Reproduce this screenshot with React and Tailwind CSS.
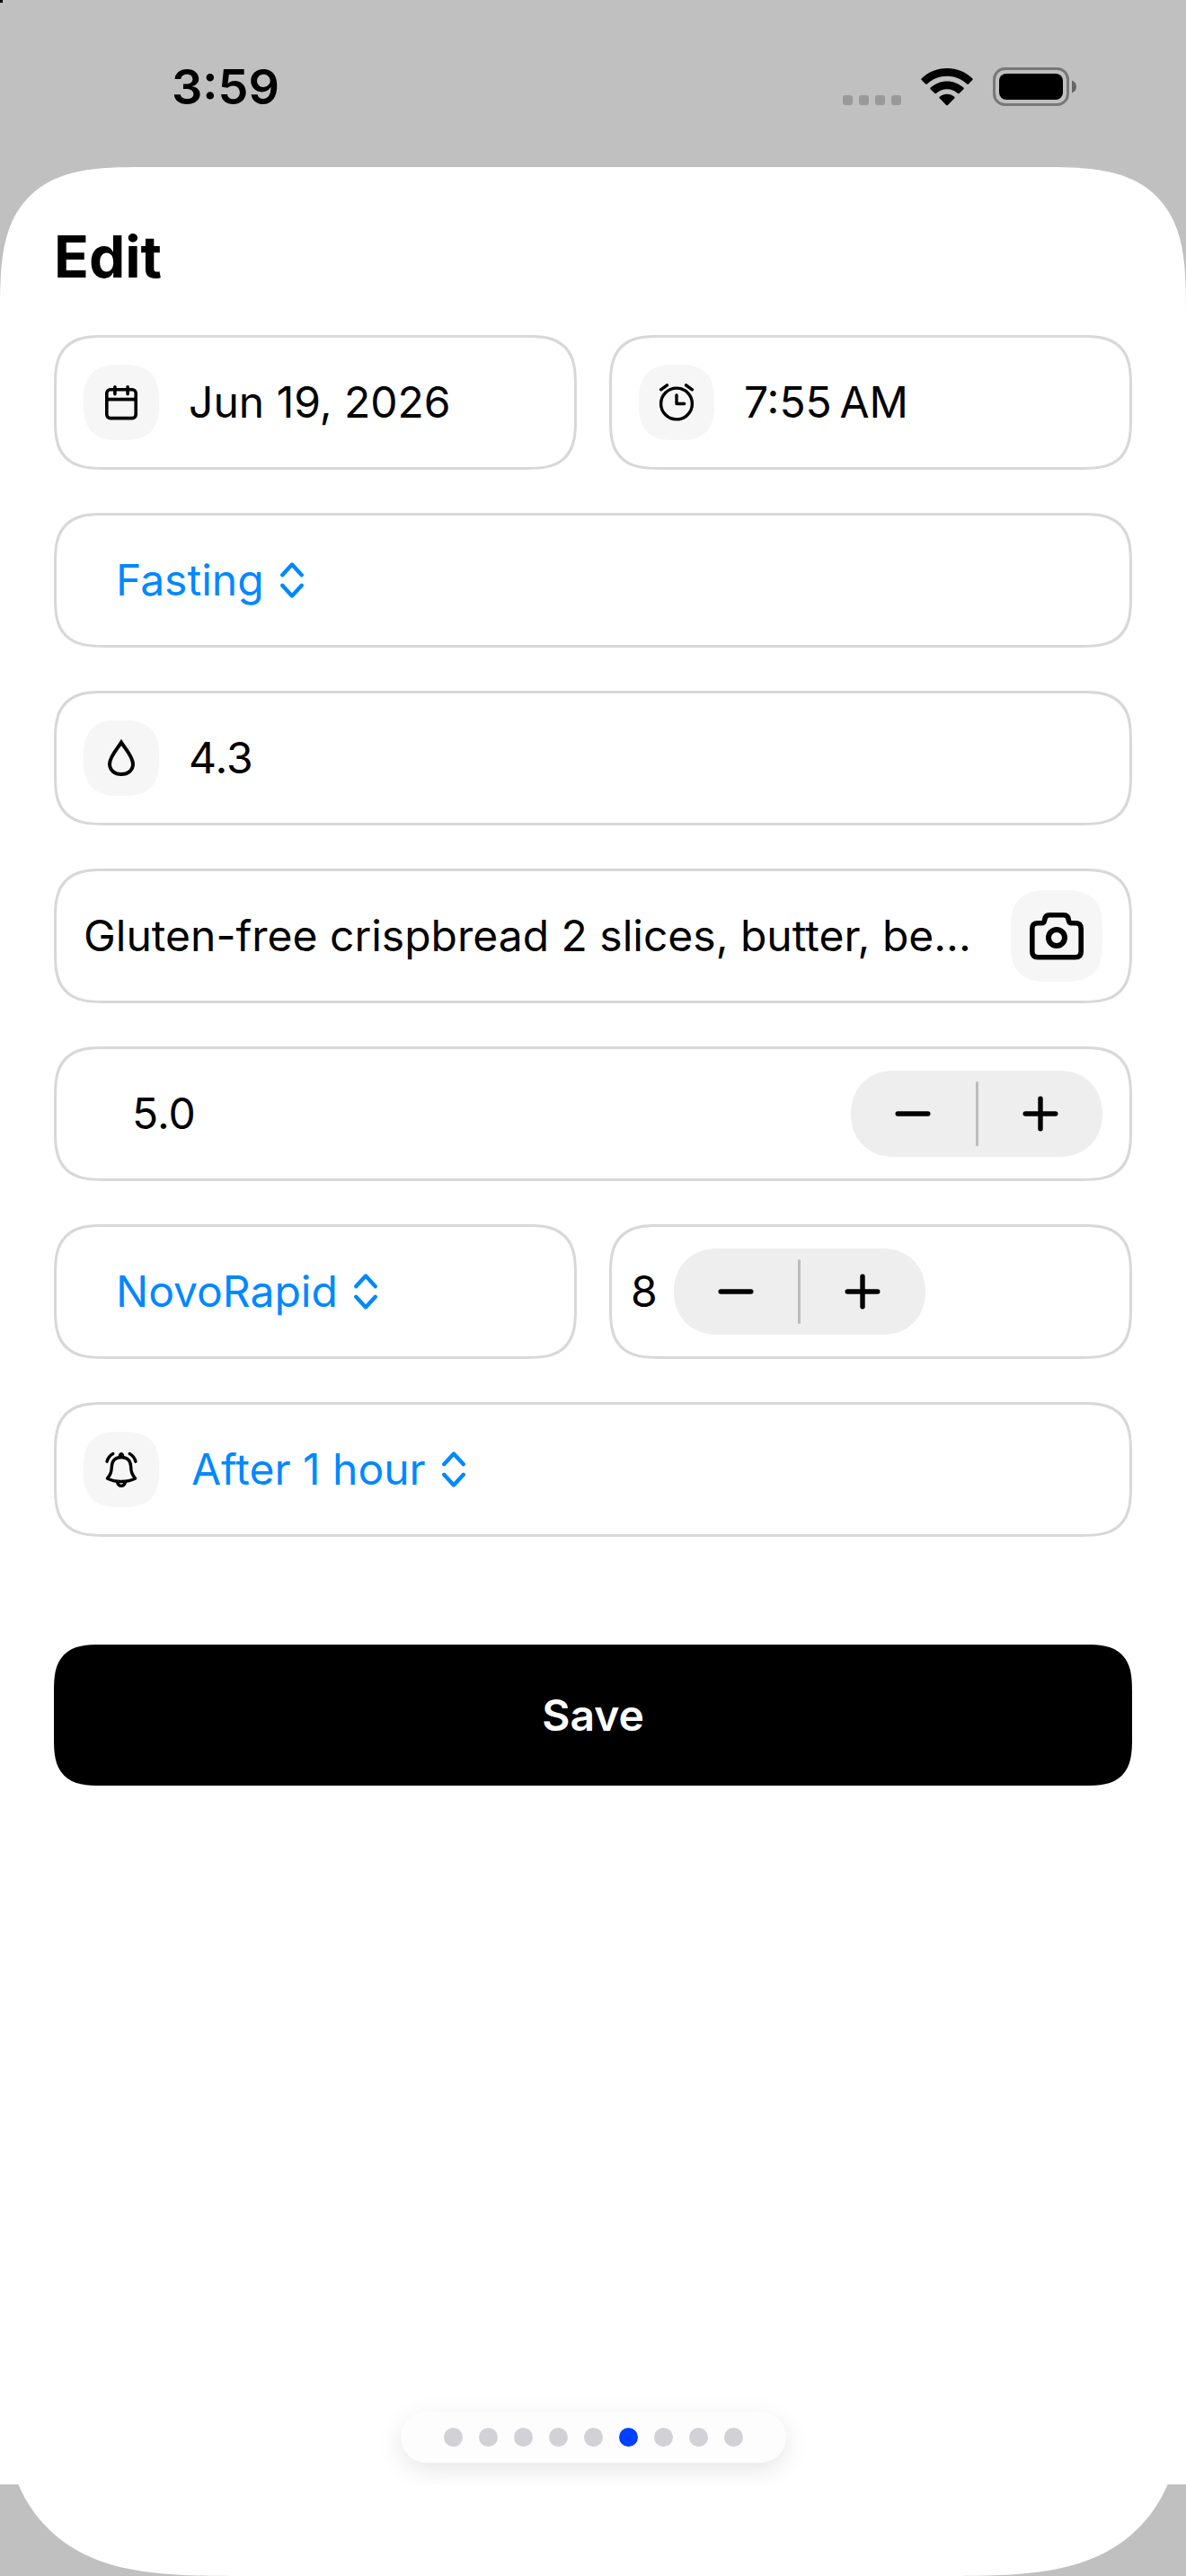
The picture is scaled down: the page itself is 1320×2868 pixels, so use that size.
import React, { useState } from 'react';

const FIELD =
  'flex h-[150px] min-w-0 items-center rounded-[56px] border-3 border-[#d8d8d8] bg-white px-[30px] [corner-shape:superellipse(1.5)]';

const IconTile = ({ children }) => (
  <span className="flex size-[84px] shrink-0 items-center justify-center rounded-[40px] bg-[#f6f6f6] [corner-shape:superellipse(1.4)]">
    {children}
  </span>
);

const CalendarIcon = () => (
  <svg width="40" height="40" viewBox="0 0 40 40" fill="none" stroke="currentColor" strokeWidth="3.6" strokeLinecap="round">
    <rect x="3.8" y="5.8" width="32.4" height="31.8" rx="4" />
    <path d="M4 16.6h32M12.9 2.8v8M27.1 2.8v8" />
  </svg>
);

const AlarmIcon = () => (
  <svg width="44" height="44" viewBox="0 0 44 44" fill="none" stroke="currentColor" strokeWidth="3.4" strokeLinecap="round" strokeLinejoin="round">
    <circle cx="22" cy="23.5" r="17.4" />
    <path d="M22 14v9.5h8.6M4.6 7.8l6.8-5M39.4 7.8l-6.8-5" />
  </svg>
);

const DropIcon = () => (
  <svg width="40" height="44" viewBox="0 0 40 44" fill="none" stroke="currentColor" strokeWidth="4">
    <path d="M20 4.6C15.600 11.600 7 20.500 7 28.600C7 35.600 12.600 40 20 40S33 35.600 33 28.600C33 20.500 24.400 11.600 20 4.600Z" />
  </svg>
);

const BellIcon = () => (
  <svg width="42" height="42" viewBox="0 0 42 42" fill="none" stroke="currentColor" strokeWidth="3.4" strokeLinecap="round" strokeLinejoin="round">
    <path d="M21 7.500C14 7.500 10.800 11.500 10.400 17.500C10 23.500 9.600 26 5.400 31C9.500 33.200 15 34.500 21 34.500S32.500 33.200 36.600 31C32.400 26 32 23.500 31.600 17.500C31.200 11.500 28 7.500 21 7.500Z" />
    <path d="M16.600 35.200c.8 3 2.400 4.200 4.400 4.200s3.600-1.200 4.400-4.200" />
    <path d="M5 12.200C6.200 8.400 8.500 5.400 11.800 3.600M37 12.200C35.800 8.400 33.500 5.400 30.200 3.600" />
    <path d="M17.400 7.400C17.800 3.600 19.200 2 21 2s3.200 1.600 3.600 5.400Z" fill="currentColor" stroke="none" />
  </svg>
);

const CameraIcon = () => (
  <svg width="60" height="54" viewBox="0 0 60 54" fill="none" stroke="currentColor" strokeWidth="5.6" strokeLinejoin="round">
    <path d="M9 12.800h4.500c1.600 0 2.600-.9 2.900-2.500l.5-2.200C17.500 5.200 19.200 3.800 22 3.800h16c2.800 0 4.500 1.400 5.100 4.300l.5 2.200c.3 1.600 1.300 2.500 2.900 2.500H51c4.200 0 6.200 2 6.200 6.200V44.500c0 4.200-2 6.200-6.200 6.200H9c-4.200 0-6.200-2-6.200-6.200V19c0-4.200 2-6.200 6.200-6.200Z" />
    <circle cx="30" cy="29" r="9" strokeWidth="6" />
  </svg>
);

const UpDownIcon = () => (
  <svg className="pointer-events-none shrink-0" width="28" height="42" viewBox="0 0 28 42" fill="none" stroke="currentColor" strokeWidth="4.400" strokeLinecap="round" strokeLinejoin="round">
    <path d="M3.200 15.200L14 3.600l10.800 11.600M3.200 26.800L14 38.400l10.800-11.600" />
  </svg>
);

const WifiIcon = () => (
  <svg width="58" height="42" viewBox="0 0 58 42" fill="currentColor">
    <path d="M29 0C40 0 49.800 4.200 57.200 11.200c.6.600.7 1.300.1 1.900L53 17.400c-.6.600-1.300.6-1.900 0C45.100 11.900 37.400 8.700 29 8.700S12.900 11.900 6.900 17.400c-.6.600-1.300.6-1.900 0L.7 13.100c-.6-.6-.5-1.300.1-1.900C8.200 4.200 18 0 29 0Z" />
    <path d="M29 14.400c7 0 13.400 2.700 18.300 7.200.6.500.6 1.200 0 1.800l-4.400 4.400c-.6.600-1.200.6-1.800.1-3.300-2.900-7.500-4.700-12.100-4.700s-8.800 1.800-12.100 4.700c-.6.500-1.200.5-1.800-.1l-4.400-4.400c-.6-.6-.6-1.300 0-1.800C15.600 17.100 22 14.400 29 14.400Z" />
    <path d="M29 28.800c3 0 5.900 1.100 8.200 3 .6.500.6 1.100 0 1.700l-7.300 7.500c-.6.600-1.200.6-1.800 0l-7.300-7.500c-.6-.6-.6-1.200 0-1.700 2.300-1.900 5.200-3 8.200-3Z" />
  </svg>
);

const BatteryIcon = () => (
  <svg width="94" height="44" viewBox="0 0 94 44">
    <rect x="1.500" y="1.500" width="82" height="40" rx="12" fill="none" stroke="#777777" strokeWidth="3" />
    <rect x="7" y="7" width="71" height="29" rx="8" />
    <path d="M88 14.500c3.200 1.200 5 3.800 5 7s-1.800 5.800-5 7Z" fill="#666666" />
  </svg>
);

const Picker = ({ label, value, onChange, options }) => (
  <div className="flex items-center gap-[17px] text-[#0088ff]">
    <select
      aria-label={label}
      value={value}
      onChange={(e) => onChange(e.target.value)}
      className="field-sizing-content cursor-pointer appearance-none bg-transparent leading-[72px] outline-none"
    >
      {options.map((option) => (
        <option key={option}>{option}</option>
      ))}
    </select>
    <UpDownIcon />
  </div>
);

const Stepper = ({ label, onStep }) => (
  <div role="group" aria-label={label} className="flex h-24 w-[280px] shrink-0 items-center rounded-[56px] bg-[#eeeeee] [corner-shape:superellipse(1.1)]">
    <button type="button" aria-label={`Decrease ${label}`} onClick={() => onStep(-1)} className="flex h-full flex-1 items-center justify-center">
      <svg width="40" height="40" viewBox="0 0 40 40" stroke="currentColor" strokeWidth="5.400" strokeLinecap="round">
        <path d="M3.200 20h33.600" />
      </svg>
    </button>
    <span className="h-[72px] w-[3px] rounded-full bg-[#bbbbbb]" />
    <button type="button" aria-label={`Increase ${label}`} onClick={() => onStep(1)} className="flex h-full flex-1 items-center justify-center">
      <svg width="40" height="40" viewBox="0 0 40 40" stroke="currentColor" strokeWidth="5.400" strokeLinecap="round">
        <path d="M3.200 20h33.600M20 3.200v33.600" />
      </svg>
    </button>
  </div>
);

const PAGES = 9;

const App = () => {
  const [date, setDate] = useState('Jun 19, 2026');
  const [time, setTime] = useState('7:55\u202fAM');
  const [period, setPeriod] = useState('Fasting');
  const [glucose, setGlucose] = useState('4.3');
  const [food, setFood] = useState('Gluten-free crispbread 2 slices, butter, be...');
  const [carbs, setCarbs] = useState(5);
  const [insulin, setInsulin] = useState('NovoRapid');
  const [dose, setDose] = useState(8);
  const [reminder, setReminder] = useState('After 1 hour');
  const [page, setPage] = useState(5);

  return (
    <div className="relative flex min-h-screen flex-col bg-[#c0c0c0] font-['Inter',sans-serif] text-5xl leading-[72px] text-black">
      <span className="absolute top-0 left-0 size-[3px] bg-black" />

      {/* Status bar */}
      <header className="flex h-[186px] items-center justify-between pt-2 pr-[121px] pl-[191px]">
        <span className="text-[54px] font-semibold">3:59</span>
        <div className="flex items-center">
          <div className="mr-[22px] mb-0.5 flex gap-[7px] self-end">
            {[0, 1, 2, 3].map((bar) => (
              <span key={bar} className="size-[11px] rounded-[3px] bg-[#999999]" />
            ))}
          </div>
          <div className="flex items-center gap-[22px]">
            <WifiIcon />
            <BatteryIcon />
          </div>
        </div>
      </header>

      {/* Sheet */}
      <main className="flex flex-1 flex-col rounded-t-[160px] bg-white px-[60px] pt-16 [corner-shape:superellipse(1.6)]">
        <h1 className="text-[64px] font-bold">Edit</h1>

        <form className="mt-[51px] flex flex-col gap-12" onSubmit={(e) => e.preventDefault()}>
          <div className="grid grid-cols-2 gap-9">
            <label className={`${FIELD} gap-[33px]`}>
              <IconTile><CalendarIcon /></IconTile>
              <input aria-label="Date" value={date} onChange={(e) => setDate(e.target.value)} className="w-full min-w-0 outline-none" />
            </label>
            <label className={`${FIELD} gap-[33px]`}>
              <IconTile><AlarmIcon /></IconTile>
              <input aria-label="Time" value={time} onChange={(e) => setTime(e.target.value)} className="w-full min-w-0 outline-none" />
            </label>
          </div>

          <div className={`${FIELD} pl-[66px]`}>
            <Picker label="Period" value={period} onChange={setPeriod} options={['Fasting', 'Before meal', 'After meal']} />
          </div>

          <label className={`${FIELD} gap-[33px]`}>
            <IconTile><DropIcon /></IconTile>
            <input aria-label="Glucose" inputMode="decimal" value={glucose} onChange={(e) => setGlucose(e.target.value)} className="w-full min-w-0 outline-none" />
          </label>

          <div className={FIELD}>
            <input aria-label="Food" value={food} onChange={(e) => setFood(e.target.value)} className="min-w-0 flex-1 text-ellipsis outline-none" />
            <button type="button" aria-label="Take photo" className="flex size-[102px] shrink-0 items-center justify-center rounded-[42px] bg-[#f6f6f6] [corner-shape:superellipse(1.4)]">
              <CameraIcon />
            </button>
          </div>

          <div className={`${FIELD} justify-between pl-[84px]`}>
            <output>{carbs.toFixed(1)}</output>
            <Stepper label="carbs" onStep={(step) => setCarbs(carbs + step * 0.5)} />
          </div>

          <div className="grid grid-cols-2 gap-9">
            <div className={`${FIELD} pl-[66px]`}>
              <Picker label="Insulin" value={insulin} onChange={setInsulin} options={['NovoRapid', 'Humalog', 'Lantus']} />
            </div>
            <div className={`${FIELD} gap-[18px] pl-[21px]`}>
              <output>{dose}</output>
              <Stepper label="dose" onStep={(step) => setDose(dose + step)} />
            </div>
          </div>

          <div className={`${FIELD} gap-9`}>
            <IconTile><BellIcon /></IconTile>
            <Picker label="Reminder" value={reminder} onChange={setReminder} options={['After 1 hour', 'After 2 hours', 'None']} />
          </div>

          <button type="submit" className="mt-[72px] h-[157px] rounded-[52px] bg-black font-semibold text-white [corner-shape:superellipse(1.5)]">
            Save
          </button>
        </form>

        {/* Page dots */}
        <nav aria-label="Pages" className="mt-auto mb-6 flex h-[57px] items-center gap-[18px] self-center rounded-full bg-[#fdfdfd] px-12 shadow-[0_8px_28px_rgba(0,0,0,0.1)]">
          {Array.from({ length: PAGES }, (_, i) => (
            <button
              key={i}
              type="button"
              aria-label={`Page ${i + 1}`}
              onClick={() => setPage(i)}
              className={`size-[21px] rounded-full ${i === page ? 'bg-[#0040ff]' : 'bg-[#d1d1d6]'}`}
            />
          ))}
        </nav>
      </main>

      {/* Rounded bottom of the sheet */}
      <div className="flex h-[102px] items-end overflow-hidden">
        <div className="h-[300px] w-full shrink-0 rounded-b-[260px] bg-white [corner-shape:superellipse(1.6)]" />
      </div>
    </div>
  );
};

export default App;
